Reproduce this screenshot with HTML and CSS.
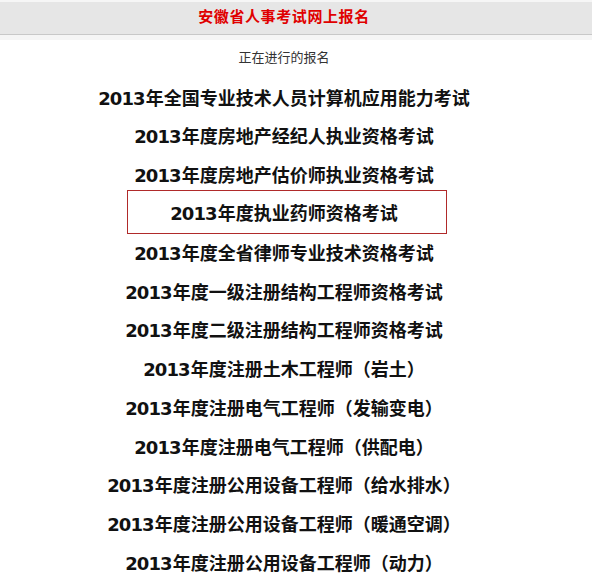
FILE: index.html
```html
<!DOCTYPE html>
<html lang="zh-CN">
<head>
<meta charset="utf-8">
<title>安徽省人事考试网上报名</title>
<link rel="stylesheet" href="styles.css">
</head>
<body>
<div class="header">
  <div class="header-bar"><span class="title">安徽省人事考试网上报名</span></div>
  <div class="header-shadow"></div>
</div>
<div class="page">
  <div class="subtitle">正在进行的报名</div>
  <ul class="list">
    <li class="item"><span class="num">2013</span>年全国专业技术人员计算机应用能力考试</li>
    <li class="item"><span class="num">2013</span>年度房地产经纪人执业资格考试</li>
    <li class="item"><span class="num">2013</span>年度房地产估价师执业资格考试</li>
    <li class="item active"><span class="num">2013</span>年度执业药师资格考试</li>
    <li class="item"><span class="num">2013</span>年度全省律师专业技术资格考试</li>
    <li class="item"><span class="num">2013</span>年度一级注册结构工程师资格考试</li>
    <li class="item"><span class="num">2013</span>年度二级注册结构工程师资格考试</li>
    <li class="item"><span class="num">2013</span>年度注册土木工程师（岩土）</li>
    <li class="item"><span class="num">2013</span>年度注册电气工程师（发输变电）</li>
    <li class="item"><span class="num">2013</span>年度注册电气工程师（供配电）</li>
    <li class="item"><span class="num">2013</span>年度注册公用设备工程师（给水排水）</li>
    <li class="item"><span class="num">2013</span>年度注册公用设备工程师（暖通空调）</li>
    <li class="item"><span class="num">2013</span>年度注册公用设备工程师（动力）</li>
  </ul>
</div>
</body>
</html>
```

FILE: styles.css
```css
html, body {
  margin: 0;
  padding: 0;
  background: #ffffff;
}
body {
  font-family: "Noto Sans CJK SC", sans-serif;
  color: #111111;
}
.header {
  padding-top: 2px;
  background: #f6f6f6;
}
.header-bar {
  height: 32px;
  background: #e6e6e6;
  border-bottom: 1px solid #c8c8c8;
  width: 568px;
  display: flex;
  align-items: center;
  justify-content: center;
  box-sizing: content-box;
  padding-right: 24px;
}
.title {
  color: #e00000;
  font-size: 15px;
  font-weight: bold;
  letter-spacing: 0.6px;
  line-height: 18px;
  margin-bottom: 4px;
}
.header-shadow {
  height: 5px;
  background: #f5f5f5;
}
.page {
  width: 568px;
}
.subtitle {
  text-align: center;
  font-size: 13px;
  color: #333333;
  line-height: 18px;
  margin-top: 8px;
}
.list {
  list-style: none;
  margin: 11.5px 0 0 0;
  padding: 0;
  display: flex;
  flex-direction: column;
  align-items: center;
}
.item {
  height: 38.8px;
  line-height: 38.8px;
  font-size: 18px;
  font-weight: bold;
  white-space: nowrap;
  box-sizing: border-box;
}
.num {
  font-family: "DejaVu Sans", sans-serif;
  letter-spacing: -0.9px;
  margin-right: 1px;
}
.item.active {
  width: 320px;
  height: 44px;
  line-height: 42px;
  margin: -3.9px 0 -1.3px 6px;
  border: 1px solid #b02a2a;
  text-align: center;
  padding-right: 6px;
}
```
